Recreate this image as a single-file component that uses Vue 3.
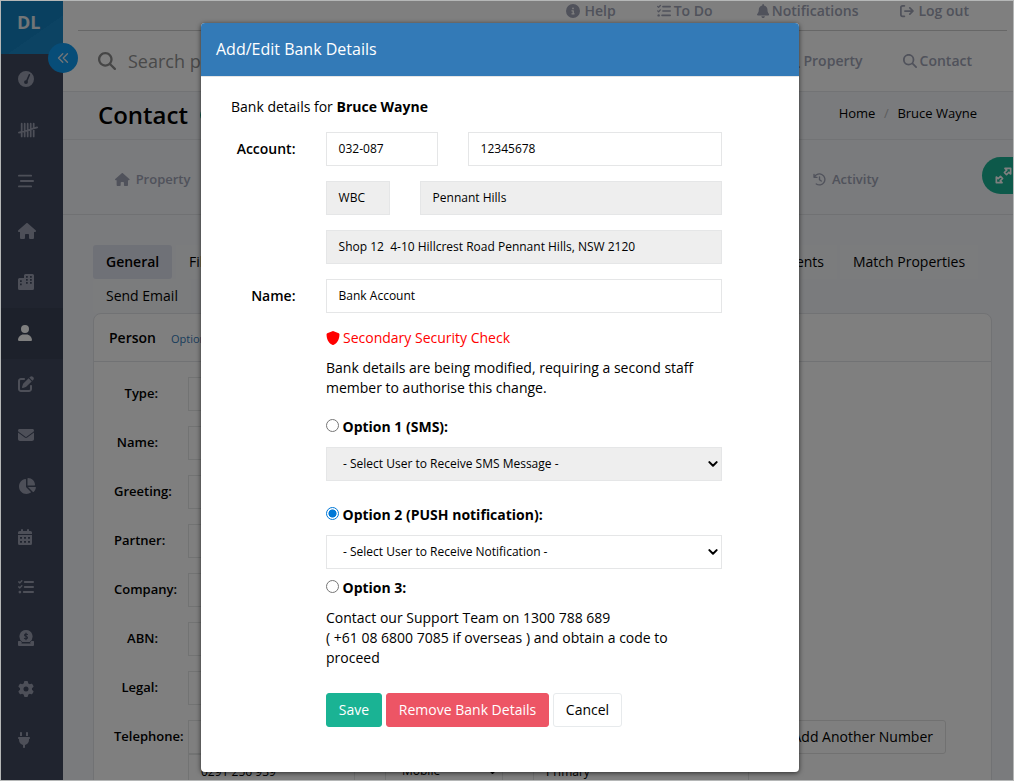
<script setup>
import { h } from 'vue'

const line = (d, w = 48) =>
  `<path d="${d}" fill="none" stroke="currentColor" stroke-width="${w}" stroke-linecap="round" stroke-linejoin="round"/>`
const solid = (d) => `<path fill="currentColor" fill-rule="evenodd" d="${d}"/>`

const icons = {
  gauge: [512, solid('M256 0a256 256 0 1 0 0 512a256 256 0 1 0 0-512zM378 97c12 7 15 21 9 33L308 322c7 11 10 21 10 33a62 62 0 1 1-57-61L345 106c6-12 21-17 33-9z')],
  tally: [640, line('M118 52V460M214 52V460M310 52V460M406 52V460M502 52V460M30 340L612 172', 56)],
  bars: [512, line('M30 84H420M92 256H482M30 428H420', 60)],
  home: [576, solid('M575.8 255.5c0 18-15 32.1-32 32.1h-32l.7 160.2c0 2.7-.2 5.4-.5 8.1V472c0 22.1-17.9 40-40 40H392c-22.1 0-40-17.9-40-40V384c0-17.7-14.3-32-32-32H256c-17.7 0-32 14.3-32 32v88c0 22.1-17.9 40-40 40H104c-22.1 0-40-17.9-40-40V287.6H32c-18 0-32-14-32-32.1c0-9 3-17 10-24L266.4 8c7-7 15-8 22-8s15 2 21 7L564.8 231.5c8 7 12 15 11 24z')],
  city: [512, solid('M48 128H192V48a48 48 0 0 1 48-48H464a48 48 0 0 1 48 48V464a48 48 0 0 1-48 48H48a48 48 0 0 1-48-48V176a48 48 0 0 1 48-48zM256 64v56h56V64zM384 64v56h56V64zM256 160v56h56v-56zM384 160v56h56v-56zM256 256v56h56v-56zM384 256v56h56v-56zM64 200v56h56v-56zM64 300v56h56v-56z')],
  user: [448, solid('M224 256A128 128 0 1 0 224 0a128 128 0 1 0 0 256zm-45.7 48C79.8 304 0 383.8 0 482.3C0 498.7 13.3 512 29.7 512H418.3c16.4 0 29.7-13.3 29.7-29.7C448 383.8 368.2 304 269.7 304H178.3z')],
  edit: [512, solid('M471.6 21.7c-21.9-21.9-57.3-21.9-79.2 0L362.3 51.7l97.9 97.9 30.1-30.1c21.9-21.9 21.9-57.3 0-79.2L471.6 21.7zm-299.2 220c-6.1 6.1-10.8 13.6-13.5 21.9l-29.6 88.8c-2.9 8.6-.6 18.1 5.8 24.6s15.9 8.7 24.6 5.8l88.8-29.6c8.2-2.7 15.7-7.4 21.9-13.5L437.7 172.3 339.7 74.3 172.4 241.7zM96 64C43 64 0 107 0 160V416c0 53 43 96 96 96H352c53 0 96-43 96-96V320c0-17.7-14.3-32-32-32s-32 14.3-32 32v96c0 17.7-14.3 32-32 32H96c-17.7 0-32-14.3-32-32V160c0-17.7 14.3-32 32-32h96c17.7 0 32-14.3 32-32s-14.3-32-32-32H96z')],
  mail: [512, solid('M48 64C21.5 64 0 85.5 0 112c0 15.1 7.1 29.3 19.2 38.4L236.8 313.6c11.4 8.5 27 8.5 38.4 0L492.8 150.4c12.1-9.1 19.2-23.3 19.2-38.4c0-26.5-21.5-48-48-48H48zM0 176V384c0 35.3 28.7 64 64 64H448c35.3 0 64-28.7 64-64V176L294.4 339.2c-22.8 17.1-54 17.1-76.8 0L0 176z')],
  pie: [576, solid('M304 240V16.6c0-9 7-16.6 16-16.6C443.7 0 544 100.3 544 224c0 9-7.6 16-16.6 16H304zM32 272C32 150.7 122.1 50.3 239 34.3c9.2-1.3 17 6.1 17 15.4V288L412.5 444.5c6.7 6.7 6.2 17.7-1.5 23.1C371.8 495.6 323.8 512 272 512C139.5 512 32 404.6 32 272zm526.4 16c9.3 0 16.6 7.8 15.4 17c-7.7 55.9-34.6 105.6-73.9 142.3c-6 5.6-15.4 5.2-21.2-.7L320 288H558.4z')],
  calendar: [448, solid('M96 32a32 32 0 0 1 64 0V64H288V32a32 32 0 0 1 64 0V64h48a48 48 0 0 1 48 48v48H0V112A48 48 0 0 1 48 64H96zM0 192H448V464a48 48 0 0 1-48 48H48a48 48 0 0 1-48-48zM64 256v56h64v-56zM192 256v56h64v-56zM320 256v56h64v-56zM64 384v56h64v-56zM192 384v56h64v-56zM320 384v56h64v-56z')],
  tasks: [512, line('M24 92L60 124L122 54M24 252L60 284L122 214', 46) + line('M216 96H482M216 256H482M184 416H482', 60) + '<circle cx="60" cy="416" r="44" fill="currentColor"/>'],
  coin: [512, solid('M256 0a208 208 0 0 1 118 380H138A208 208 0 0 1 256 0zM14 352H86Q104 390 132 412H112v18H400v-18H380Q408 390 426 352H498a14 14 0 0 1 14 14V480a32 32 0 0 1-32 32H32a32 32 0 0 1-32-32V366a14 14 0 0 1 14-14z') + '<path d="M302 142C268 122 210 126 210 164C210 214 304 190 304 246C304 284 240 292 206 266M256 94V310" fill="none" stroke="#40485f" stroke-width="34" stroke-linecap="round"/>'],
  gear: [512, solid('M495.9 166.6c3.2 8.7 .5 18.4-6.4 24.6l-43.3 39.4c1.1 8.3 1.7 16.8 1.7 25.4s-.6 17.1-1.7 25.4l43.3 39.4c6.9 6.2 9.6 15.9 6.4 24.6c-4.4 11.9-9.7 23.3-15.8 34.3l-4.7 8.1c-6.6 11-14 21.4-22.1 31.2c-5.9 7.2-15.7 9.6-24.5 6.8l-55.7-17.7c-13.4 10.3-28.2 18.9-44 25.4l-12.5 57.1c-2 9.1-9 16.3-18.2 17.8c-13.8 2.3-28 3.5-42.5 3.5s-28.7-1.2-42.5-3.5c-9.2-1.5-16.2-8.7-18.2-17.8l-12.5-57.1c-15.8-6.5-30.6-15.1-44-25.4L83.1 425.9c-8.8 2.8-18.6 .3-24.5-6.8c-8.1-9.8-15.5-20.2-22.1-31.2l-4.7-8.1c-6.1-11-11.4-22.4-15.8-34.3c-3.2-8.7-.5-18.4 6.4-24.6l43.3-39.4C64.6 273.1 64 264.6 64 256s.6-17.1 1.7-25.4L22.4 191.2c-6.9-6.2-9.6-15.9-6.4-24.6c4.4-11.9 9.7-23.3 15.8-34.3l4.7-8.1c6.6-11 14-21.4 22.1-31.2c5.9-7.2 15.7-9.6 24.5-6.8l55.7 17.7c13.4-10.3 28.2-18.9 44-25.4l12.5-57.1c2-9.1 9-16.3 18.2-17.8C227.3 1.2 241.5 0 256 0s28.7 1.2 42.5 3.5c9.2 1.5 16.2 8.7 18.2 17.8l12.5 57.1c15.8 6.5 30.6 15.1 44 25.4l55.7-17.7c8.8-2.8 18.6-.3 24.5 6.8c8.1 9.8 15.5 20.2 22.1 31.2l4.7 8.1c6.1 11 11.4 22.4 15.8 34.3zM256 336a80 80 0 1 0 0-160 80 80 0 1 0 0 160z')],
  plug: [384, solid('M96 0C78.3 0 64 14.3 64 32v96h64V32c0-17.7-14.3-32-32-32zM288 0c-17.7 0-32 14.3-32 32v96h64V32c0-17.7-14.3-32-32-32zM32 160c-17.7 0-32 14.3-32 32s14.3 32 32 32v32c0 77.4 55 142 128 156.8V480c0 17.7 14.3 32 32 32s32-14.3 32-32V412.8C297 398 352 333.4 352 256V224c17.7 0 32-14.3 32-32s-14.3-32-32-32H32z')],
  search: [512, solid('M416 208c0 45.9-14.9 88.3-40 122.7L502.6 457.4c12.5 12.5 12.5 32.8 0 45.3s-32.8 12.5-45.3 0L330.7 376c-34.4 25.2-76.8 40-122.7 40C93.1 416 0 322.9 0 208S93.1 0 208 0S416 93.1 416 208zM208 352a144 144 0 1 0 0-288 144 144 0 1 0 0 288z')],
  bell: [448, solid('M224 0c-17.7 0-32 14.3-32 32V51.2C119 66 64 130.6 64 208v18.8c0 47-17.3 92.4-48.5 127.6l-7.4 8.3c-8.4 9.4-10.4 22.9-5.3 34.4S19.4 416 32 416H416c12.6 0 24-7.4 29.2-18.9s3.1-25-5.3-34.4l-7.4-8.3C401.3 319.2 384 273.9 384 226.8V208c0-77.4-55-142-128-156.8V32c0-17.7-14.3-32-32-32zm45.3 493.3c12-12 18.7-28.3 18.7-45.3H224 160c0 17 6.7 33.3 18.7 45.3s28.3 18.7 45.3 18.7s33.3-6.7 45.3-18.7z')],
  info: [512, solid('M256 512A256 256 0 1 0 256 0a256 256 0 1 0 0 512zM216 336h24V272H216c-13.3 0-24-10.7-24-24s10.7-24 24-24h48c13.3 0 24 10.7 24 24v88h8c13.3 0 24 10.7 24 24s-10.7 24-24 24H216c-13.3 0-24-10.7-24-24s10.7-24 24-24zm40-208a32 32 0 1 1 0 64 32 32 0 1 1 0-64z')],
  logout: [512, line('M160 64H96A64 64 0 0 0 32 128V384A64 64 0 0 0 96 448H160M180 256H470M360 140L476 256L360 372', 64)],
  history: [512, line('M62 150A216 216 0 1 1 130 432M40 52V170H158M256 150V262L326 318', 52)],
  chevrons: [512, line('M246 76L66 256L246 436M446 76L266 256L446 436', 58)],
  expand: [512, line('M300 40H472V212L418 158L346 230L282 166L354 94ZM212 472H40V300L94 354L166 282L230 346L158 418Z', 50)],
  shield: [512, solid('M256 0L466 84C482 90 492 104 492 122C492 290 432 434 284 505Q256 518 228 505C80 434 20 290 20 122C20 104 30 90 46 84Z')],
  down: [512, line('M70 160L256 346L442 160', 104)],
}

const Ico = (props) =>
  h('svg', {
    viewBox: `0 0 ${icons[props.name][0]} 512`,
    height: props.size,
    width: (props.size * icons[props.name][0]) / 512,
    innerHTML: icons[props.name][1],
  })
Ico.props = ['name', 'size']

const menu = ['gauge', 'tally', 'bars', 'home', 'city', 'user', 'edit', 'mail', 'pie', 'calendar', 'tasks', 'coin', 'gear', 'plug']
const fields = ['Type:', 'Name:', 'Greeting:', 'Partner:', 'Company:', 'ABN:', 'Legal:', 'Telephone:']
</script>

<template>
  <div class="screen">
    <aside class="side">
      <div class="logo">DL</div>
      <div v-for="m in menu" :key="m" class="item" :class="{ active: m === 'user' }">
        <Ico :name="m" :size="16" />
      </div>
      <div class="toggle"><Ico name="chevrons" :size="12" /></div>
    </aside>

    <main class="main">
      <header class="top">
        <nav class="links">
          <span class="link help"><Ico name="info" :size="14" />Help</span>
          <span class="link todo"><Ico name="tasks" :size="14" />To Do</span>
          <span class="link bell"><Ico name="bell" :size="14" />Notifications</span>
          <span class="link out"><Ico name="logout" :size="14" />Log out</span>
        </nav>
        <div class="searchbar">
          <Ico class="glass" name="search" :size="18" />
          <span class="query">Search p</span>
          <span class="link prop"><Ico name="search" :size="14" />Property</span>
          <span class="link contact"><Ico name="search" :size="14" />Contact</span>
        </div>
      </header>
      <section class="heading">
        <h1>Contact</h1><i class="dot"></i>
        <div class="crumbs"><span>Home</span><em>/</em><span>Bruce Wayne</span></div>
      </section>
      <section class="strip">
        <span class="link first"><Ico name="home" :size="13" />Property</span>
        <span class="link activity"><Ico name="history" :size="13" />Activity</span>
        <div class="expand"><Ico name="expand" :size="17" /></div>
      </section>
      <section class="content">
        <div class="tabs">
          <span class="tab on">General</span><span class="tab">Files</span>
          <span class="tab docs">Documents</span><span class="tab match">Match Properties</span>
        </div>
        <div class="tabs"><span class="tab">Send Email</span></div>
        <div class="panel">
          <div class="panel-head"><b>Person</b><a>Options</a></div>
          <div class="form">
            <div v-for="f in fields" :key="f" class="field">
              <label>{{ f }}</label>
              <div class="box"></div>
              <div v-if="f === 'Telephone:'" class="add">Add Another Number</div>
            </div>
            <div class="phone">
              <div class="cell num">0291 256 939</div>
              <div class="cell kind">Mobile<Ico name="down" :size="9" /></div>
              <div class="cell prim">Primary</div>
            </div>
          </div>
        </div>
      </section>
    </main>

    <div class="overlay">
      <div class="modal">
        <div class="modal-head">Add/Edit Bank Details</div>
        <div class="modal-body">
          <p class="who">Bank details for <b>Bruce Wayne</b></p>
          <div class="row">
            <label>Account:</label>
            <div class="inputs">
              <div class="line split"><div class="input bsb">032-087</div><div class="input">12345678</div></div>
              <div class="line split"><div class="input off bank">WBC</div><div class="input off">Pennant Hills</div></div>
              <div class="input off">Shop 12&nbsp; 4-10 Hillcrest Road Pennant Hills, NSW 2120</div>
            </div>
          </div>
          <div class="row">
            <label>Name:</label>
            <div class="inputs"><div class="input">Bank Account</div></div>
          </div>
          <div class="detail">
            <div class="warn"><Ico name="shield" :size="14" />Secondary Security Check</div>
            <p>Bank details are being modified, requiring a second staff member to authorise this change.</p>
            <div class="option one"><i class="radio"></i>Option 1 (SMS):</div>
            <div class="input select off">- Select User to Receive SMS Message -<Ico name="down" :size="10" /></div>
            <div class="option two"><i class="radio checked"></i>Option 2 (PUSH notification):</div>
            <div class="input select">- Select User to Receive Notification -<Ico name="down" :size="10" /></div>
            <div class="option three"><i class="radio"></i>Option 3:</div>
            <p>Contact our Support Team on 1300 788 689<br />( +61 08 6800 7085 if overseas ) and obtain a code to proceed</p>
            <div class="buttons">
              <button class="save">Save</button>
              <button class="remove">Remove Bank Details</button>
              <button class="cancel">Cancel</button>
            </div>
          </div>
        </div>
      </div>
    </div>
    <div class="frame"></div>
  </div>
</template>

<style>
body { margin: 0; overflow: hidden; }
</style>

<style scoped>
* { box-sizing: border-box; }
svg { flex: none; display: block; }
.screen { position: relative; width: 1014px; height: 781px; display: flex; overflow: hidden; padding: 1px 1px 0; font: 14px/20px "Open Sans", sans-serif; color: #000; background: #f4f6fa; }
.side { position: relative; width: 62px; flex: none; background: #40485f; color: #9a9fb0; z-index: 1; }
.logo { height: 53px; padding: 9px 0 0 16px; font-size: 18px; line-height: 25px; font-weight: 700; color: #e4eaee; background: linear-gradient(145deg, #1280c0 60%, #1886c6 60%); }
.item { height: 50.85px; padding: 0 0 1px 17px; display: flex; align-items: center; }
.item.active { background: #3a4256; color: #fff; }
.toggle { position: absolute; left: 47px; top: 42px; width: 30px; height: 30px; border-radius: 50%; background: #0f9af0; color: #e4eaee; display: flex; align-items: center; justify-content: center; }
.main { flex: 1; min-width: 0; display: flex; flex-direction: column; }
.top { height: 91px; flex: none; background: #fff; border-bottom: 1px solid #e4e6ea; padding-left: 15px; }
.links { width: 929px; height: 30px; border-bottom: 1px solid #cfcfcf; display: flex; justify-content: flex-end; padding-right: 38px; }
.link { display: flex; align-items: center; gap: 4px; font-weight: 600; color: #a0a4b6; white-space: nowrap; line-height: 20px; height: 20px; }
.todo { margin-left: 41px; gap: 3px; }
.bell { margin-left: 44px; gap: 3px; }
.out { margin-left: 42px; }
.searchbar { height: 60px; display: flex; align-items: center; padding: 0 41px 0 20px; }
.glass { color: #8c8c8c; }
.query { font-size: 18px; line-height: 26px; color: #929292; margin-left: 12px; }
.prop { margin-left: auto; margin-right: 40px; }
.contact, .prop { gap: 3px; }
.heading { height: 48px; flex: none; display: flex; align-items: center; border-bottom: 1px solid #e4e6ea; padding: 0 36px 2px 35px; }
h1 { font-size: 24px; line-height: 30px; font-weight: 600; margin: 0; }
.dot { width: 14px; height: 14px; margin-left: 12px; border-radius: 50%; background: #1ab394; }
.crumbs { margin-left: auto; font-size: 13px; display: flex; padding-bottom: 4px; }
.crumbs em { font-style: normal; color: #bbb; width: 22px; text-align: center; }
.strip { position: relative; height: 75px; flex: none; border-bottom: 1px solid #e0e2e6; display: flex; align-items: center; padding: 4px 0 0 52px; font-size: 13px; }
.first { gap: 6px; width: 698px; }
.activity { gap: 6px; }
.expand { position: absolute; left: 919px; top: 17px; width: 42px; height: 37px; border-radius: 19px 0 0 19px; background: #1ab394; color: #fff; padding: 10px 0 0 13px; }
.content { padding: 30px 0 0 30px; flex: 1; min-height: 0; }
.tabs { display: flex; height: 34px; }
.tab { padding: 7px 13px; white-space: nowrap; background: #f7f8fa; }
.tab.on { font-weight: 600; background: #dfe2ee; border-radius: 3px; width: 79px; margin-right: 4px; }
.docs { margin-left: auto; margin-right: 3px; }
.match { margin-right: 35px; width: 138px; }
.tabs .tab:first-child { border-radius: 3px; }
.panel { width: 899px; height: 500px; border: 1px solid #e2e4e8; border-radius: 8px 8px 0 0; background: #fff; }
.panel-head { height: 48px; display: flex; align-items: center; padding-left: 15px; border-bottom: 1px solid #e2e4e8; }
.panel-head b { font-weight: 600; }
.panel-head a { margin: 2px 0 0 15px; font-size: 11px; color: #337ab7; }
.form { padding: 15px 0 0 20px; }
.field { display: flex; height: 34px; margin-bottom: 15px; }
.field:nth-child(8) { margin-bottom: 0; }
.field label { width: 44px; font-size: 13px; font-weight: 600; text-align: right; white-space: nowrap; padding-top: 6px; display: block; margin-right: 30px; }
.box { width: 500px; border: 1px solid #e5e6e7; }
.add { margin-left: auto; border: 1px solid #e2e2e2; border-radius: 3px; padding: 6px 12px; margin-right: 45px; }
.phone { margin-left: 74px; display: flex; height: 34px; font-size: 12px; line-height: 34px; }
.cell { border: 1px solid #e5e6e7; padding-left: 12px; flex: none; }
.num { width: 167px; }
.kind { width: 118px; margin-left: 30px; padding: 0 5px 0 16px; display: flex; justify-content: space-between; align-items: center; }
.prim { width: 216px; margin-left: 30px; }
.overlay { position: absolute; inset: 0; z-index: 5; background: rgba(0, 0, 0, .5); padding: 23px 0 0 201px; }
.modal { width: 598px; height: 749px; background: #fff; border-radius: 4px; box-shadow: 0 1px 5px rgba(0, 0, 0, .65); overflow: hidden; }
.modal-head { height: 54px; background: #337ab7; color: #fff; font-size: 16px; line-height: 22px; padding: 15px; border-bottom: 1px solid #e5e5e5; }
.modal-body { padding: 20px 77px 0 30px; }
p { margin: 0; }
.who { margin-bottom: 15px; }
.row { display: flex; margin-bottom: 15px; }
.row label { width: 64.5px; margin-right: 30.5px; text-align: right; font-weight: 600; line-height: 34px; }
.inputs { flex: 1; display: flex; flex-direction: column; gap: 15px; }
.split { display: flex; gap: 30px; }
.input { flex: 1; height: 34px; flex-basis: auto; border: 1px solid #e5e6e7; font-size: 12px; line-height: 32px; padding: 0 11.6px; white-space: nowrap; }
.off { background: #eee; }
.input.bsb { flex: none; width: 112px; }
.input.bank { flex: none; width: 64px; }
.detail { margin-left: 95px; }
.warn { display: flex; align-items: center; gap: 3px; color: #f00; margin-bottom: 10px; }
.option { display: flex; font-weight: 700; gap: 3.5px; }
.one { margin: 19px 0 10px; }
.two { margin: 24px 0 10px; }
.three { margin: 9px 0 10px; }
.radio { width: 13px; height: 13px; margin-top: 2px; border: 1px solid #767676; border-radius: 50%; background: #fff; }
.radio.checked { border-color: #0078d7; background: radial-gradient(circle, #0078d7 0 3.7px, #fff 4.4px); }
.select { display: flex; align-items: center; justify-content: space-between; padding: 0 3px 0 16px; }
.buttons { display: flex; gap: 4px; margin-top: 25px; }
button { height: 34px; padding: 0 11.6px; border: 1px solid; border-radius: 3px; font: 14px/20px "Open Sans", sans-serif; color: #fff; white-space: nowrap; }
.save { background: #1ab394; border-color: #1ab394; width: 56px; }
.remove { background: #ed5565; border-color: #ed5565; width: 163px; }
.cancel { background: #fff; border-color: #e7eaec; color: #000; width: 69px; }
.frame { position: absolute; inset: 0; z-index: 6; border: 1px solid #b5b7b7; pointer-events: none; }
</style>
